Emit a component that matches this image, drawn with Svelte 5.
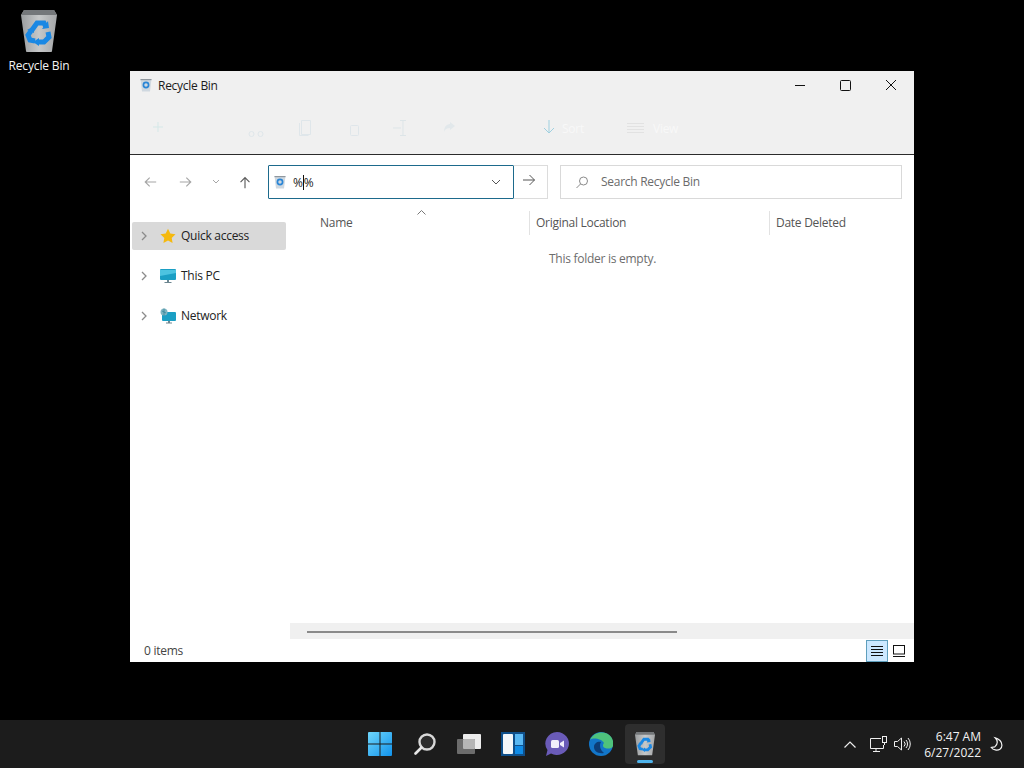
<script>
  const tree = [
    { label: 'Quick access', kind: 'star', active: true },
    { label: 'This PC', kind: 'pc' },
    { label: 'Network', kind: 'net' }
  ];
  const columns = [
    { label: 'Name', width: 240, pad: 30 },
    { label: 'Original Location', width: 240, pad: 6 },
    { label: 'Date Deleted', width: 144, pad: 6 }
  ];
</script>

{#snippet bin(size)}
  <svg width={size} height={size * 1.17} viewBox="0 0 36 42" aria-hidden="true">
    <defs>
      <linearGradient id="binBody" x1="0" x2="1" y1="0" y2="0">
        <stop offset="0" stop-color="#9a9d9f" />
        <stop offset="0.5" stop-color="#c6c8c9" />
        <stop offset="1" stop-color="#a4a6a8" />
      </linearGradient>
    </defs>
    <path d="M3 0h30l3 5-5 36a1 1 0 0 1-1 1H6a1 1 0 0 1-1-1L0 5z" fill="url(#binBody)" />
    <path d="M3 0h30l3 5H0z" fill="#74777a" />
    <g fill="none" stroke="#1a88e4" stroke-width="5">
      <path d="M11 20l5-7 7 0 2 4" />
      <path d="M27 22l1 5-5 5h-6" />
      <path d="M14 31l-5-1-2-5 3-4" />
    </g>
    <path d="M21 19l7-1-1-7zM18 28l-6 4 6 4zM6 20l7 3 0-7z" fill="#1a88e4" />
  </svg>
{/snippet}

{#snippet smallBin()}
  <svg width="12" height="14" viewBox="0 0 12 14" aria-hidden="true">
    <path d="M.5 1h11L10 13.500H2z" fill="#cfd8e0" />
    <path d="M.5 1h11v1.200H.5z" fill="#8f979e" />
    <circle cx="6" cy="7" r="2.600" fill="none" stroke="#2a86d6" stroke-width="1.700" />
  </svg>
{/snippet}

{#snippet chevronRight()}
  <svg class="tw" width="8" height="10" viewBox="0 0 8 10"><path d="M2 1l4 4-4 4" fill="none" stroke="#8b8b8b" stroke-width="1.3" /></svg>
{/snippet}

<div class="screen">
  <main class="desktop">
    <div class="shortcut">
      {@render bin(36)}
      <span>Recycle Bin</span>
    </div>

    <section class="window">
      <header class="titlebar">
        <div class="title">
          {@render smallBin()}
          <span>Recycle Bin</span>
        </div>
        <div class="controls">
          <button aria-label="Minimize"><svg width="12" height="12" viewBox="0 0 12 12"><path d="M1 6.500h10" stroke="#111" /></svg></button>
          <button aria-label="Maximize"><svg width="12" height="12" viewBox="0 0 12 12"><rect x=".5" y="1.500" width="10" height="10" rx="1" fill="none" stroke="#111" /></svg></button>
          <button aria-label="Close"><svg width="12" height="12" viewBox="0 0 12 12"><path d="M1 1l10 10M11 1L1 11" stroke="#111" /></svg></button>
        </div>
      </header>

      <div class="commands">
        <svg class="c1" width="10" height="10" viewBox="0 0 10 10"><path d="M5 0v10M0 5h10" stroke="#d5e8e8" /></svg>
        <svg class="c2" width="16" height="6" viewBox="0 0 16 6"><circle cx="3.500" cy="3" r="2.500" fill="none" stroke="#dfe6ea" /><circle cx="12.500" cy="3" r="2.500" fill="none" stroke="#dfe6ea" /></svg>
        <svg class="c3" width="12" height="16" viewBox="0 0 12 16"><path d="M2.500.5h9v14h-9zM.5 3v12.500h9" fill="none" stroke="#dfe6ea" /></svg>
        <svg class="c4" width="9" height="11" viewBox="0 0 9 11"><rect x=".5" y=".5" width="8" height="10" rx="1" fill="none" stroke="#dfe6ea" /></svg>
        <svg class="c5" width="16" height="16" viewBox="0 0 16 16"><path d="M11 .5v15M8 .5h6M8 15.500h6M1 8h8" fill="none" stroke="#dde5e8" /></svg>
        <svg class="c6" width="12" height="12" viewBox="0 0 12 12"><path d="M7 1l5 4-5 4V7C4 7 2 8 1 11 1 6 3 3.500 7 3z" fill="#e2e8eb" /></svg>
        <svg class="c7" width="14" height="14" viewBox="0 0 14 14"><path d="M7 0v13M2 8l5 5 5-5" fill="none" stroke="#9fd0e0" /></svg>
        <span class="faint c8">Sort</span>
        <svg class="c9" width="17" height="11" viewBox="0 0 17 11"><path d="M0 .5h17M0 3.500h17M0 6.500h17M0 9.500h17" stroke="#e2e2e2" /></svg>
        <span class="faint c10">View</span>
      </div>

      <nav class="navbar">
        <div class="arrows">
          <svg width="13" height="12" viewBox="0 0 16 14"><path d="M15 7H2M7 1.500L1.500 7 7 12.500" fill="none" stroke="#a6a6a6" stroke-width="1.400" /></svg>
          <svg width="13" height="12" viewBox="0 0 16 14"><path d="M1 7h13M9 1.500L14.500 7 9 12.500" fill="none" stroke="#a6a6a6" stroke-width="1.400" /></svg>
          <svg width="8" height="6" viewBox="0 0 8 6"><path d="M1 1l3 3 3-3" fill="none" stroke="#a6a6a6" /></svg>
          <svg width="12" height="13" viewBox="0 0 14 16"><path d="M7 15V2M1.500 7.500L7 2l5.500 5.500" fill="none" stroke="#5c5c5c" stroke-width="1.400" /></svg>
        </div>
        <div class="address">
          {@render smallBin()}
          <span class="path">%<i class="caret"></i>%</span>
          <svg class="dd" width="10" height="6" viewBox="0 0 10 6"><path d="M1 1l4 4 4-4" fill="none" stroke="#555" /></svg>
        </div>
        <div class="go">
          <svg width="14" height="12" viewBox="0 0 14 12"><path d="M1 6h11.500M7.500 1l5 5-5 5" fill="none" stroke="#555" /></svg>
        </div>
        <div class="search">
          <svg width="12" height="13" viewBox="0 0 12 13"><circle cx="7.500" cy="5" r="4" fill="none" stroke="#8a8a8a" /><path d="M4.500 8L.5 12" stroke="#8a8a8a" /></svg>
          <span>Search Recycle Bin</span>
        </div>
      </nav>

      <div class="body">
        <aside class="tree">
          {#each tree as item}
            <div class="node" class:active={item.active}>
              {@render chevronRight()}
              {#if item.kind === 'star'}
                <svg width="16" height="16" viewBox="0 0 16 16"><path d="M8 .8l2.300 4.700 5.200.8-3.800 3.600.9 5.200L8 12.600l-4.600 2.500.9-5.200L.5 6.300l5.200-.8z" fill="#f5b90f" /></svg>
              {:else if item.kind === 'pc'}
                <svg width="16" height="16" viewBox="0 0 16 16"><rect x="0" y="1" width="16" height="11" rx="1" fill="#1b9fc4" /><path d="M0 2h16v3L0 8z" fill="#4cc3e0" /><path d="M7 12h2v2H7zM4.500 14h7v1h-7z" fill="#6d8690" /></svg>
              {:else}
                <svg width="16" height="16" viewBox="0 0 16 16"><rect x="2" y="4" width="14" height="9" rx="1" fill="#1b9fc4" /><circle cx="4" cy="4" r="3.500" fill="#7fb4c2" /><path d="M2 3l4 2M4 .5v7" stroke="#2d7f93" stroke-width=".7" /><path d="M8 13h2v1.500H8zM6 14.500h6v1H6z" fill="#6d8690" /></svg>
              {/if}
              <span>{item.label}</span>
            </div>
          {/each}
        </aside>

        <div class="list">
          <div class="heads">
            {#each columns as col, i}
              <div class="head" class:sep={i < 2} style:width="{col.width}px" style:padding-left="{col.pad}px">{col.label}</div>
            {/each}
            <svg class="sort" width="9" height="5" viewBox="0 0 9 5"><path d="M.5 4.500l4-4 4 4" fill="none" stroke="#777" /></svg>
          </div>
          <p class="empty">This folder is empty.</p>
          <div class="hscroll"><div class="thumb"></div></div>
        </div>
      </div>

      <footer class="status">
        <span>0 items</span>
        <div class="views">
          <div class="view on">
            <svg width="12" height="10" viewBox="0 0 12 10"><path d="M0 .5h12M0 3.500h12M0 6.500h12M0 9.500h12" stroke="#111" /></svg>
          </div>
          <div class="view">
            <svg width="12" height="12" viewBox="0 0 12 12"><rect x=".5" y=".5" width="11" height="8.500" fill="none" stroke="#111" /><path d="M0 11.500h12" stroke="#111" /></svg>
          </div>
        </div>
      </footer>
    </section>
  </main>

  <footer class="taskbar">
    <div></div>
    <div class="apps">
      <div class="app start">
        <svg width="24" height="24" viewBox="0 0 24 24"><defs><linearGradient id="win" x1="0" y1="0" x2="1" y2="1"><stop offset="0" stop-color="#6fd6fb" /><stop offset="1" stop-color="#1193ec" /></linearGradient></defs><path d="M0 1a1 1 0 0 1 1-1h10.500v11.500H0zM12.500 0H23a1 1 0 0 1 1 1v10.500H12.500zM0 12.500h11.500V24H1a1 1 0 0 1-1-1zM12.500 12.500H24V23a1 1 0 0 1-1 1H12.500z" fill="url(#win)" /></svg>
      </div>
      <div class="app">
        <svg width="22" height="22" viewBox="0 0 22 22"><circle cx="13" cy="9" r="7.500" fill="#2c2c2c" stroke="#d8d8d8" stroke-width="2.400" /><path d="M7.500 14.500L1.500 20.500" stroke="#e6e6e6" stroke-width="2.600" stroke-linecap="round" /></svg>
      </div>
      <div class="app">
        <svg width="24" height="20" viewBox="0 0 24 20"><rect x="6" y="0" width="18" height="15" rx="1" fill="#ececec" /><rect x="0" y="5" width="18" height="15" rx="1" fill="#6c6c6c" /><rect x="6" y="5" width="12" height="10" rx="1" fill="#b5b5b5" /></svg>
      </div>
      <div class="app">
        <svg width="24" height="24" viewBox="0 0 24 24"><rect width="24" height="24" fill="#0f4f8a" /><rect x="2" y="2" width="10" height="20" rx="1" fill="#f4f7fa" /><rect x="14" y="2" width="8" height="11" fill="#58b7f2" /><rect x="14" y="14" width="8" height="8" fill="#0f8be6" /></svg>
      </div>
      <div class="app">
        <svg width="24" height="24" viewBox="0 0 24 24"><path d="M12 0a12 11.500 0 1 1-6 21.500L1 24l1.500-6A12 11.500 0 0 1 12 0z" fill="#6a5bb8" /><rect x="6" y="8" width="8" height="8" rx="1.500" fill="#f1eefb" /><path d="M15 11l4-2.500v7L15 13z" fill="#f1eefb" /></svg>
      </div>
      <div class="app">
        <svg width="24" height="24" viewBox="0 0 24 24"><circle cx="12" cy="12" r="12" fill="#1276c9" /><path d="M1 8C4 1 12-1 18 1.500 23 4 25 9 24 14c-1 3-5 3-8 2-3-1-2-4-1-5C13 7 4 5 1 8z" fill="#4ec27c" /><path d="M5 15c0-4 4-6 7-5-2 3-1 8 3 11-6 1-10-2-10-6z" fill="#0c3d78" /></svg>
      </div>
      <div class="app current">
        {@render bin(20)}
        <i class="running"></i>
      </div>
    </div>
    <div class="tray">
      <svg class="up" width="12" height="7" viewBox="0 0 12 7"><path d="M.5 6.500L6 1l5.500 5.500" fill="none" stroke="#eee" stroke-width="1.200" /></svg>
      <svg class="net" width="18" height="16" viewBox="0 0 18 16"><path d="M11 2.500H.5v10h13V9M6 13v2M3 15.500h7" fill="none" stroke="#eee" /><rect x="12.500" y=".5" width="4" height="6" fill="none" stroke="#eee" /><path d="M14.500 7v2" stroke="#eee" /></svg>
      <svg class="vol" width="17" height="14" viewBox="0 0 17 14"><path d="M.5 4.500h3L7.500 1v12l-4-3.500h-3zM10 4.500a3.500 3.500 0 0 1 0 5M12 3a6 6 0 0 1 0 8M14 1a9 9 0 0 1 0 12" fill="none" stroke="#eee" /></svg>
      <div class="clock"><span>6:47 AM</span><span>6/27/2022</span></div>
      <svg class="moon" width="13" height="16" viewBox="0 0 15 16"><path d="M6 .8c3 3 3.500 7-.5 10.500L1.500 12c2 3 7 4 10 2 3-2 3-7 0-10C10 2.500 8 1.200 6 .8z" fill="none" stroke="#f2f2f2" stroke-width="1.400" /></svg>
    </div>
  </footer>
</div>

<style>
  :global(body) {
    margin: 0;
    background: #000;
  }
  .screen {
    width: 1024px;
    height: 768px;
    display: flex;
    flex-direction: column;
    font-family: "Open Sans", "Noto Sans", sans-serif;
    font-size: 12px;
    letter-spacing: -0.27px;
    color: #1a1a1a;
    overflow: hidden;
  }
  .desktop {
    flex: 1;
    position: relative;
    background: #000;
  }
  .shortcut {
    position: absolute;
    left: 0;
    top: 10px;
    width: 78px;
    display: flex;
    flex-direction: column;
    align-items: center;
    gap: 5px;
    color: #f4f4f4;
    letter-spacing: -0.15px;
  }
  .window {
    position: absolute;
    left: 130px;
    top: 71px;
    width: 784px;
    height: 591px;
    background: #fff;
    display: flex;
    flex-direction: column;
  }
  .titlebar {
    height: 29px;
    background: #f0f0f0;
    display: flex;
    justify-content: space-between;
    align-items: center;
    padding-left: 10px;
  }
  .title {
    display: flex;
    align-items: center;
    gap: 6px;
    padding-bottom: 1px;
  }
  .controls {
    display: flex;
    margin-top: -2px;
  }
  .controls button {
    width: 45.500px;
    height: 29px;
    border: 0;
    padding: 0;
    background: none;
    display: flex;
    align-items: center;
    justify-content: center;
  }
  .commands {
    position: relative;
    height: 54px;
    background: #f0f0f0;
    border-bottom: 1px solid #2b2b2b;
  }
  .commands > * {
    position: absolute;
  }
  .c1 { left: 23px; top: 22px; }
  .c2 { left: 118px; top: 31px; }
  .c3 { left: 169px; top: 20px; }
  .c4 { left: 220px; top: 25px; }
  .c5 { left: 262px; top: 20px; }
  .c6 { left: 313px; top: 21px; }
  .c7 { left: 412px; top: 20px; }
  .c8 { left: 432px; top: 20px; }
  .c9 { left: 497px; top: 23px; }
  .c10 { left: 523px; top: 20px; }
  .faint {
    color: #f8f8f8;
  }
  .navbar {
    height: 54px;
    box-sizing: border-box;
    padding-top: 10px;
    display: flex;
    align-items: flex-start;
  }
  .arrows {
    width: 138px;
    height: 34px;
    display: flex;
    align-items: center;
    padding-left: 14px;
    box-sizing: border-box;
  }
  .arrows svg:nth-child(2) {
    margin-left: 22px;
  }
  .arrows svg:nth-child(3) {
    margin-left: 20px;
  }
  .arrows svg:nth-child(4) {
    margin-left: 19px;
  }
  .address {
    width: 246px;
    height: 34px;
    box-sizing: border-box;
    border: 1px solid #1d6a8c;
    border-radius: 1px;
    display: flex;
    align-items: center;
    padding-left: 5px;
    gap: 7px;
  }
  .path {
    flex: 1;
    color: #222;
  }
  .caret {
    display: inline-block;
    width: 1px;
    height: 15px;
    background: #111;
    vertical-align: -3px;
  }
  .dd {
    margin-right: 12px;
  }
  .go {
    width: 34px;
    height: 34px;
    box-sizing: border-box;
    border: 1px solid #dcdcdc;
    border-left: 0;
    display: flex;
    align-items: center;
    justify-content: center;
    padding: 0 3px 4px 0;
  }
  .search {
    width: 342px;
    height: 34px;
    margin-left: 12px;
    box-sizing: border-box;
    border: 1px solid #d9d9d9;
    display: flex;
    align-items: center;
    padding-left: 15px;
    gap: 13px;
    color: #6b6b6b;
  }
  .search span {
    margin-top: -1px;
  }
  .body {
    flex: 1;
    min-height: 0;
    display: flex;
  }
  .tree {
    width: 160px;
    padding: 13px 4px 0 2px;
    box-sizing: border-box;
    display: flex;
    flex-direction: column;
    gap: 12px;
  }
  .node {
    height: 28px;
    display: flex;
    align-items: center;
    padding-left: 8px;
    border-radius: 2px;
    color: #222;
  }
  .node.active {
    background: #d9d9d9;
  }
  .node .tw {
    margin-right: 12px;
  }
  .node span {
    margin-left: 5px;
    margin-top: -1px;
  }
  .list {
    flex: 1;
    min-width: 0;
    position: relative;
    display: flex;
    flex-direction: column;
  }
  .heads {
    position: relative;
    display: flex;
    height: 28px;
    box-sizing: border-box;
  }
  .head {
    height: 24px;
    margin-top: 2px;
    line-height: 24px;
    box-sizing: border-box;
    color: #555;
  }
  .head.sep {
    border-right: 1px solid #e2e2e2;
  }
  .sort {
    position: absolute;
    left: 127px;
    top: 1px;
  }
  .empty {
    margin: 13px 0 0 259px;
    color: #6d6d6d;
    font-size: 12px;
  }
  .hscroll {
    margin-top: auto;
    height: 16px;
    background: #f0f0f0;
    display: flex;
    align-items: center;
    padding-left: 17px;
  }
  .thumb {
    width: 370px;
    height: 2px;
    background: #8a8a8a;
    margin-top: 1px;
  }
  .status {
    height: 23px;
    box-sizing: border-box;
    display: flex;
    align-items: center;
    justify-content: space-between;
    padding-left: 14px;
    color: #444;
  }
  .views {
    display: flex;
    align-items: center;
    margin-right: 4px;
  }
  .view {
    width: 22px;
    height: 22px;
    box-sizing: border-box;
    display: flex;
    align-items: center;
    justify-content: center;
  }
  .view.on {
    background: #cce8ff;
    border: 1px solid #5f9fbd;
  }
  .taskbar {
    height: 48px;
    flex: none;
    background: #1c1c1c;
    display: grid;
    grid-template-columns: 1fr auto 1fr;
    align-items: center;
    color: #f2f2f2;
    letter-spacing: 0;
  }
  .apps {
    display: flex;
    align-items: center;
  }
  .app {
    position: relative;
    width: 44px;
    height: 40px;
    display: flex;
    align-items: center;
    justify-content: center;
    border-radius: 4px;
  }
  .app.start {
    margin-right: 1px;
  }
  .app.current {
    background: #2e2e2e;
    width: 40px;
    margin: 0 2px;
  }
  .running {
    position: absolute;
    left: 12px;
    bottom: 1px;
    width: 16px;
    height: 3px;
    border-radius: 2px;
    background: #4fb4ec;
  }
  .tray {
    display: flex;
    align-items: center;
    justify-content: flex-end;
    padding-right: 21px;
  }
  .net {
    margin-left: 14px;
  }
  .vol {
    margin-left: 6px;
  }
  .clock {
    display: flex;
    flex-direction: column;
    align-items: flex-end;
    line-height: 16px;
    margin-left: 13px;
    padding-top: 2px;
  }
  .clock span {
    white-space: nowrap;
  }
  .moon {
    margin-left: 9px;
  }
</style>
